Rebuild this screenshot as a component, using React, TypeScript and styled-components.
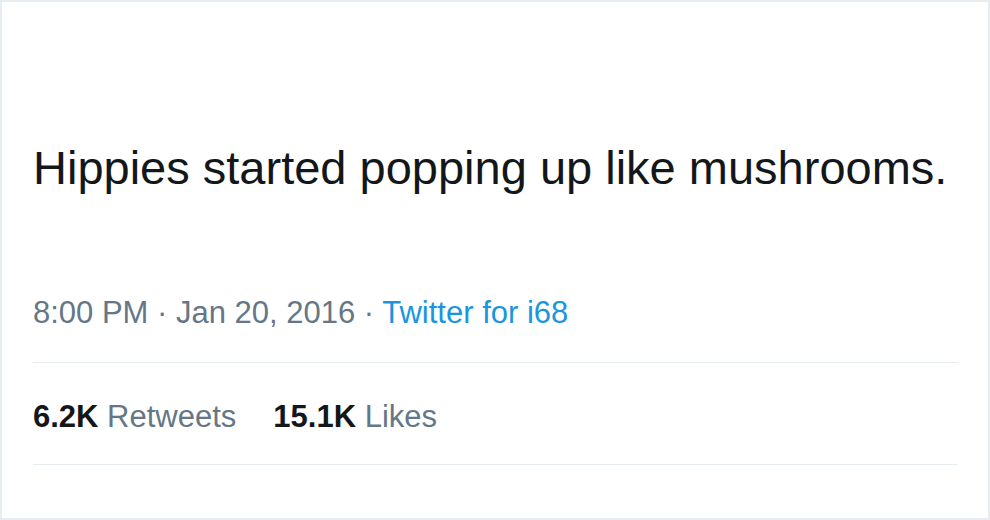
import React from "react";
import styled, { createGlobalStyle } from "styled-components";

const Global = createGlobalStyle`
  html, body { margin: 0; padding: 0; background: #ffffff; }
  * { box-sizing: border-box; }
`;

const Card = styled.article`
  width: 990px;
  height: 520px;
  border: 2px solid #e6ecf0;
  background: #ffffff;
  padding: 138px 30px 0 31px;
  font-family: "Liberation Sans", Arial, sans-serif;
  display: flex;
  flex-direction: column;
`;

const TweetText = styled.p`
  margin: 0;
  font-size: 47px;
  line-height: 56px;
  color: #14171a;
`;

const Meta = styled.div`
  margin-top: 99px;
  font-size: 31px;
  line-height: 36px;
  color: #657786;
`;

const Source = styled.a`
  color: #1b95e0;
  text-decoration: none;
`;

const Divider = styled.hr<{ $gap: number }>`
  margin: ${(p) => p.$gap}px 0 0;
  border: none;
  height: 1px;
  background: #e6ecf0;
`;

const Stats = styled.div`
  margin-top: 36px;
  display: flex;
  gap: 37px;
  font-size: 31px;
  line-height: 36px;
`;

const Stat = styled.span`
  color: #657786;
`;

const Count = styled.strong`
  color: #14171a;
  font-weight: 700;
`;

export default function App() {
  return (
    <>
      <Global />
      <Card>
        <TweetText>Hippies started popping up like mushrooms.</TweetText>
        <Meta>
          8:00 PM · Jan 20, 2016 · <Source href="#">Twitter for i68</Source>
        </Meta>
        <Divider $gap={31} />
        <Stats>
          <Stat>
            <Count>6.2K</Count> Retweets
          </Stat>
          <Stat>
            <Count>15.1K</Count> Likes
          </Stat>
        </Stats>
        <Divider $gap={29} />
      </Card>
    </>
  );
}
